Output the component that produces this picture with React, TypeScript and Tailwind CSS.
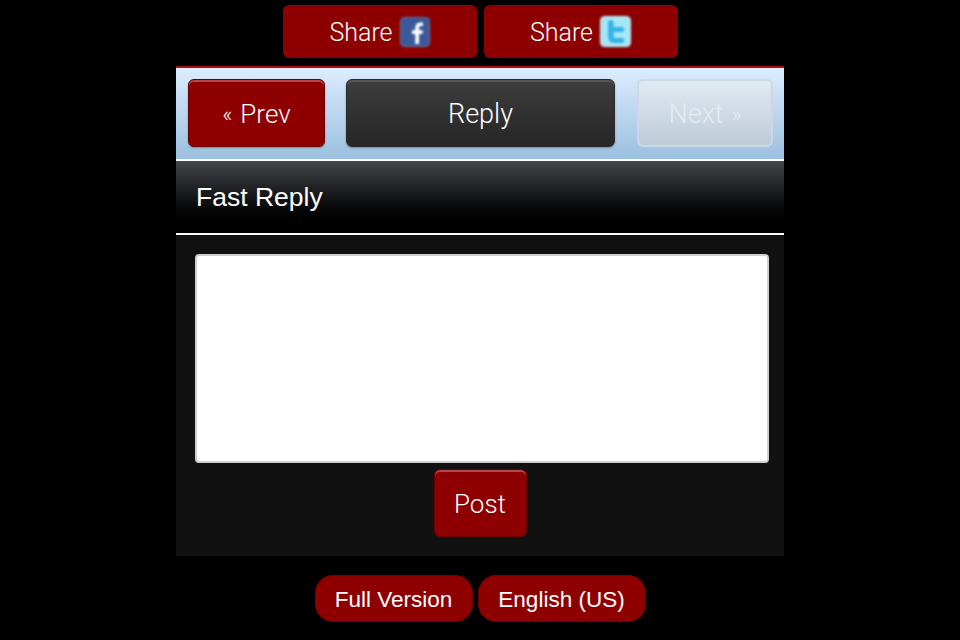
import React from 'react';

const sans = "font-['Liberation_Sans',Arial,sans-serif]";
const light = "font-['Roboto',Arial,sans-serif] font-light";

function IconFacebook() {
  return (
    <svg width="30" height="30" viewBox="0 0 30 30" className="blur-[0.8px]">
      <rect x="0.5" y="0.5" width="29" height="29" rx="4" fill="#3b5998" stroke="#6277a6" />
      <path
        d="M19 27V17h3.400l.5-3.800H19V11c0-1.200.4-1.900 2-1.900h2V5.700C22.500 5.600 21.400 5.500 20.300 5.500c-3 0-5 1.800-5 5.100v2.600H12V17h3.300v10z"
        fill="#fff"
      />
    </svg>
  );
}

function IconTwitter() {
  return (
    <svg width="31" height="31" viewBox="0 0 31 31" className="blur-[0.8px]">
      <rect x="0.5" y="0.5" width="30" height="30" rx="4" fill="#a6e6f6" stroke="#c4f0fb" />
      <path
        d="M8 6.500C8 5 9.200 4 10.700 4s2.800 1 2.800 2.500V11h8c1.500 0 2.800 1 2.800 2.500S23 16 21.500 16h-8v3.500c0 1.700 1 2.500 2.500 2.500h5.500c1.500 0 2.800 1.100 2.800 2.600S23 27 21.500 27H15c-4.500 0-7-2.500-7-7z"
        fill="#35b4e8"
      />
    </svg>
  );
}

function ShareButton({ icon }: { icon: React.ReactNode }) {
  return (
    <a className="flex h-[53px] w-[194px] items-center justify-center gap-[7px] rounded-[6px] bg-[#8e0000] text-[25px] text-white">
      <span className={`${light} pt-[2px]`}>Share</span>
      {icon}
    </a>
  );
}

function FooterButton({ label, width }: { label: string; width: string }) {
  return (
    <a
      className={`${sans} ${width} flex h-[47px] items-center justify-center rounded-[18px] border border-[#7a0000] bg-[#8e0000] pt-[3px] text-[22.5px] text-white`}
    >
      {label}
    </a>
  );
}

export default function App() {
  return (
    <div className="flex h-[640px] w-[960px] flex-col items-center overflow-hidden bg-black">
      <div className="flex gap-[7px] pt-[5px]">
        <ShareButton icon={<IconFacebook />} />
        <ShareButton icon={<IconTwitter />} />
      </div>

      <div className="mt-2 w-[608px]">
        <div className="h-[2px] bg-[#a80f0f]" />

        <div className="flex h-[91px] items-center bg-gradient-to-b from-[#dcedff] to-[#9bbfdf] pb-[1px] pl-3">
          <a className="flex h-[68px] w-[137px] items-center justify-center gap-2 rounded-[6px] border border-[#6e0000] bg-[#8e0000] pt-[2px] text-white shadow-[inset_0_2px_0_#b5474a,0_1px_2px_rgba(0,0,0,0.3)]">
            <span className={`${light} text-[22px]`}>«</span>
            <span className={`${light} text-[26px]`}>Prev</span>
          </a>
          <a
            className={`${light} ml-[21px] flex h-[68px] w-[269px] items-center justify-center rounded-[6px] border border-[#2a2a2a] bg-gradient-to-b from-[#3d3d3d] to-[#262626] pt-[2px] text-[27px] text-white shadow-[inset_0_2px_0_#555,0_1px_2px_rgba(0,0,0,0.3)]`}
          >
            Reply
          </a>
          <a className="ml-[22px] flex h-[68px] w-[136px] items-center justify-center gap-2 rounded-[6px] border-2 border-[#c9d9e7] bg-gradient-to-b from-[#e2eaf2] to-[#bdcbd8] pt-[2px] text-[#e4ebf2]">
            <span className={`${light} text-[27px]`}>Next</span>
            <span className={`${light} text-[22px]`}>»</span>
          </a>
        </div>

        <div className="border-y-2 border-white bg-gradient-to-b from-[#45474c] to-[#000000]">
          <h2
            className={`${sans} flex h-[72px] items-center pl-5 pt-[2px] text-[26.5px] font-normal text-white`}
          >
            Fast Reply
          </h2>
        </div>

        <div className="flex h-[321px] flex-col items-center bg-[#111111] pl-[19px] pr-[15px] pt-[19px]">
          <div className="h-[209px] w-full rounded-[4px] border-2 border-[#cfcfcf] bg-white" />
          <a
            className={`${light} mr-[4px] mt-[6px] flex h-[68px] w-[93px] items-center justify-center rounded-[6px] border border-[#6e0000] bg-[#8e0000] pt-[2px] text-[26px] text-white shadow-[inset_0_2px_0_#b5474a]`}
          >
            Post
          </a>
        </div>
      </div>

      <div className="mt-[19px] flex gap-[5px]">
        <FooterButton label="Full Version" width="w-[158px]" />
        <FooterButton label="English (US)" width="w-[168px]" />
      </div>
    </div>
  );
}
